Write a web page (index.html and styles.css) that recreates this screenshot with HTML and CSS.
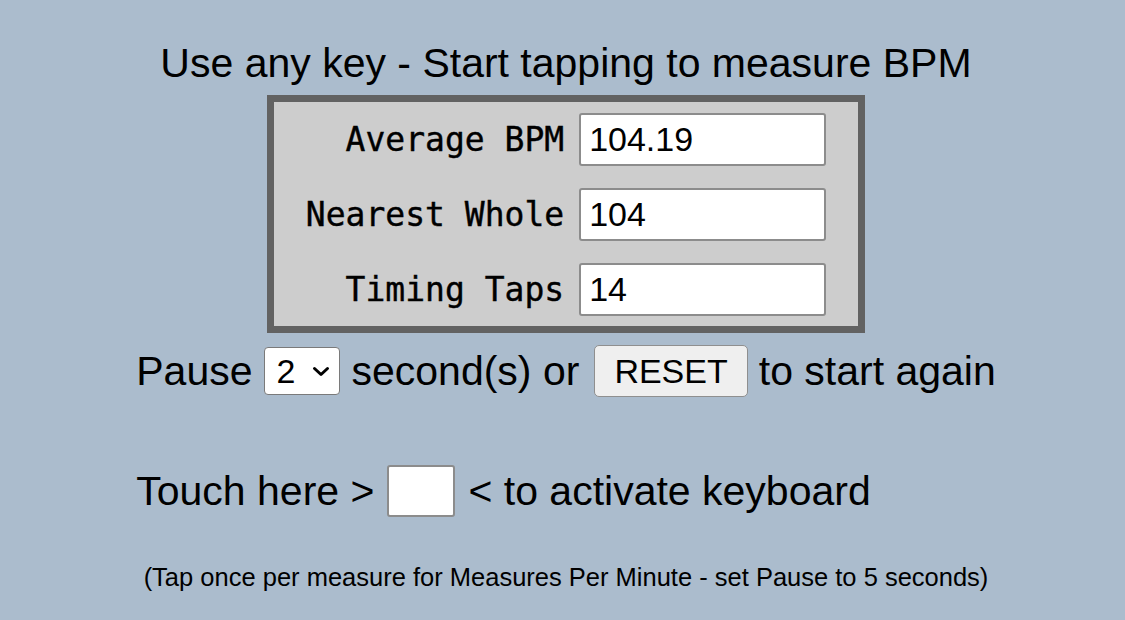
FILE: index.html
```html
<!DOCTYPE html>
<html lang="en">
<head>
<meta charset="utf-8">
<title>Tap BPM</title>
<link rel="stylesheet" href="styles.css">
</head>
<body>
<div class="page">
  <p class="title">Use any key - Start tapping to measure BPM</p>
  <div class="panel">
    <label class="label" for="avg">Average BPM</label>
    <input class="field" id="avg" type="text" value="104.19">
    <label class="label" for="whole">Nearest Whole</label>
    <input class="field" id="whole" type="text" value="104">
    <label class="label" for="taps">Timing Taps</label>
    <input class="field" id="taps" type="text" value="14">
  </div>
  <div class="controls">
    <div class="line">
      <span>Pause</span>
      <span class="select-wrap">
        <select class="select">
          <option>1</option>
          <option selected>2</option>
          <option>3</option>
          <option>4</option>
          <option>5</option>
        </select>
        <svg class="chev" width="18" height="11" viewBox="0 0 18 11"><polyline points="2.5,2.5 9,8.5 15.5,2.5" fill="none" stroke="#000" stroke-width="3" stroke-linecap="round" stroke-linejoin="round"/></svg>
      </span>
      <span>second(s) or</span>
      <button class="reset" type="button">RESET</button>
      <span>to start again</span>
    </div>
    <div class="line touch">
      <span>Touch here &gt;</span>
      <input class="touch-box" type="text" aria-label="keyboard">
      <span>&lt; to activate keyboard</span>
    </div>
  </div>
  <p class="note">(Tap once per measure for Measures Per Minute - set Pause to 5 seconds)</p>
</div>
</body>
</html>
```
FILE: styles.css
```css
html, body {
  margin: 0;
  padding: 0;
}
body {
  background: #abbccd;
  color: #000;
  font-family: "Liberation Sans", Arial, sans-serif;
}
.page {
  padding-top: 40px;
  padding-left: 7px;
}
.title {
  margin: 0;
  font-size: 41px;
  line-height: 47px;
  text-align: center;
}
.panel {
  width: fit-content;
  margin: 8px auto 0;
  border: 7px solid #626262;
  background: #cdcdcd;
  padding: 11px 32px 10px;
  display: grid;
  grid-template-columns: auto 247px;
  column-gap: 15px;
  row-gap: 22px;
  align-items: center;
}
.label {
  font-family: "DejaVu Sans Mono", "Liberation Mono", monospace;
  font-size: 33px;
  text-align: right;
  color: #000;
  -webkit-text-stroke: 0.4px #000;
}
.field {
  box-sizing: border-box;
  width: 247px;
  height: 53px;
  margin: 0;
  border: 2px solid #8c8c8c;
  border-radius: 3px;
  background: #fff;
  font-family: "Liberation Sans", Arial, sans-serif;
  font-size: 34px;
  color: #000;
  padding: 0 8px;
}
.controls {
  width: fit-content;
  margin: 12px auto 0;
  font-size: 41px;
}
.line {
  display: flex;
  align-items: center;
  line-height: 47px;
  white-space: nowrap;
}
.line > span:first-child {
  margin-right: 11px;
}
.select-wrap {
  position: relative;
  display: inline-flex;
  margin-right: 12px;
}
.select {
  appearance: none;
  -webkit-appearance: none;
  box-sizing: border-box;
  width: 76px;
  height: 48px;
  margin: 0;
  border: 1.5px solid #7a7a7a;
  border-radius: 4px;
  background: #fff;
  font-family: "Liberation Sans", Arial, sans-serif;
  font-size: 34px;
  color: #000;
  padding: 0 0 0 12px;
}
.chev {
  position: absolute;
  right: 10px;
  top: 19px;
  pointer-events: none;
}
.reset {
  box-sizing: border-box;
  height: 52px;
  margin: 0 11px 0 15px;
  padding: 0 19px;
  border: 1.5px solid #8f8f8f;
  border-radius: 5px;
  background: #efefef;
  font-family: "Liberation Sans", Arial, sans-serif;
  font-size: 34px;
  color: #000;
}
.touch {
  margin-top: 68px;
}
.touch > span:first-child {
  margin-right: 13px;
}
.touch-box {
  box-sizing: border-box;
  width: 68px;
  height: 52px;
  margin: 0 13px 0 0;
  border: 2px solid #8c8c8c;
  border-radius: 3px;
  background: #fff;
}
.note {
  margin: 46px 0 0;
  font-size: 25.5px;
  line-height: 29px;
  text-align: center;
}
```
